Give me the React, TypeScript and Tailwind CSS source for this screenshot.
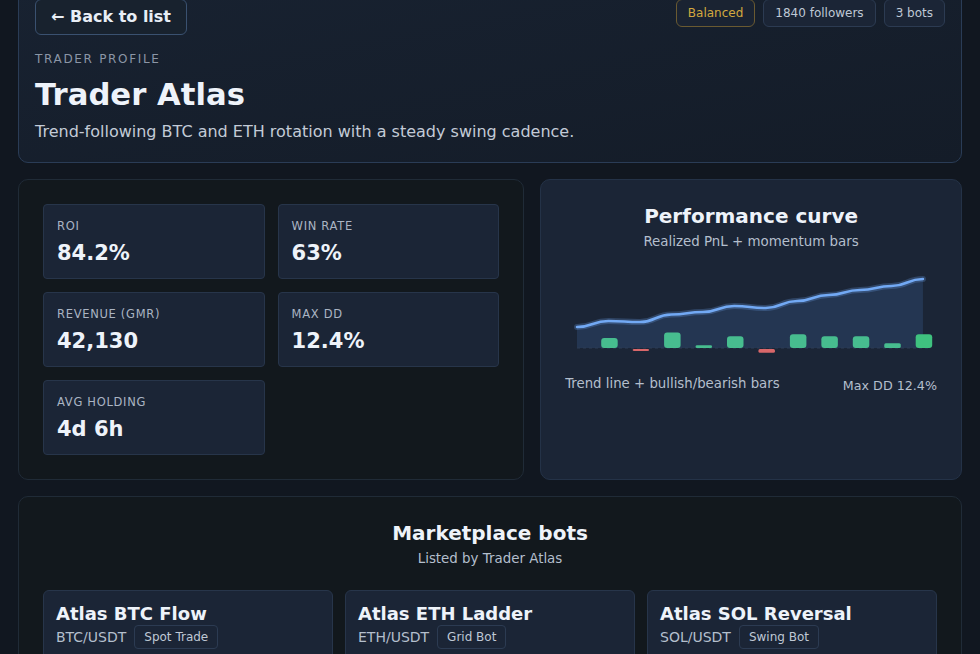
import React from 'react'

const stats = [
  { label: 'ROI', value: '84.2%' },
  { label: 'Win rate', value: '63%' },
  { label: 'Revenue (GMR)', value: '42,130' },
  { label: 'Max DD', value: '12.4%' },
  { label: 'Avg holding', value: '4d 6h' },
]

const bots = [
  { name: 'Atlas BTC Flow', pair: 'BTC/USDT', kind: 'Spot Trade' },
  { name: 'Atlas ETH Ladder', pair: 'ETH/USDT', kind: 'Grid Bot' },
  { name: 'Atlas SOL Reversal', pair: 'SOL/USDT', kind: 'Swing Bot' },
]

// equity curve points (svg coords) and momentum bars
const curve = [65, 59, 60, 52.5, 50, 44, 46, 39, 33, 28, 24, 17]
const bars = [10, -2, 15.5, 2.7, 11.7, -3.7, 13.7, 11.7, 11.7, 4.7, 13.7]
const BASE = 86

function PerformanceChart() {
  const xs = curve.map((_, i) => 12 + i * 31.45)
  let d = `M ${xs[0]} ${curve[0]}`
  for (let i = 1; i < curve.length; i++) {
    const mx = (xs[i - 1] + xs[i]) / 2
    d += ` C ${mx} ${curve[i - 1]} ${mx} ${curve[i]} ${xs[i]} ${curve[i]}`
  }
  const area = `${d} L ${xs[xs.length - 1]} ${BASE} L ${xs[0]} ${BASE} Z`

  return (
    <svg width="371" height="96" viewBox="0 0 371 96" className="block">
      <path d={area} fill="#263a57" opacity="0.85" />
      <line x1="12" y1={BASE} x2="366" y2={BASE} stroke="#2c3c54" strokeWidth="1" strokeDasharray="3 3" />
      {bars.map((h, i) => {
        const cx = xs[i + 1] + 1
        const up = h >= 0
        const hh = Math.max(Math.abs(h), 2)
        return (
          <rect
            key={i}
            x={cx - 8.25}
            y={up ? BASE - hh : BASE + 1}
            width="16.5"
            height={hh}
            rx={hh < 5 ? 1.5 : 3}
            fill={up ? (i === bars.length - 1 ? '#3fc27f' : '#47bd8f') : '#d9676a'}
          />
        )
      })}
      <path d={d} fill="none" stroke="#6fa8f5" strokeOpacity="0.25" strokeWidth="6" strokeLinecap="round" />
      <path d={d} fill="none" stroke="#72a9f4" strokeWidth="2.5" strokeLinecap="round" />
    </svg>
  )
}

export default function App() {
  return (
    <div className="min-h-screen bg-[#111720] text-[#e8eef6] font-['DejaVu_Sans',sans-serif]">
      <div className="-mt-[18px] flex flex-col gap-4 px-[18px] pb-8">
        {/* profile header */}
        <section className="rounded-[10px] border border-[#2a3c56] bg-gradient-to-br from-[#182231] to-[#141c28] px-4 pt-4 pb-[18px]">
          <div className="flex items-start justify-between">
            <button className="rounded-md border border-[#3a5170] bg-[#18222e] px-[15px] py-[7px] text-base leading-5 font-bold text-[#e8eef6]">
              ← Back to list
            </button>
            <div className="flex gap-2">
              <span className="rounded-md border border-[#6a5a31] bg-[#1a2332] px-[11px] py-[4px] text-xs leading-[18px] text-[#d2a83f]">
                Balanced
              </span>
              <span className="rounded-md border border-[#2c3b52] bg-[#1b2536] px-[11px] py-[4px] text-xs leading-[18px] text-[#bfc8d5]">
                1840 followers
              </span>
              <span className="rounded-md border border-[#2c3b52] bg-[#1b2536] px-[11px] py-[4px] text-xs leading-[18px] text-[#bfc8d5]">
                3 bots
              </span>
            </div>
          </div>
          <div className="mt-4 text-xs leading-4 tracking-[0.14em] text-[#8b96a6]">TRADER PROFILE</div>
          <h1 className="mt-2 text-[30.7px] leading-10 font-bold text-[#eef3fa]">Trader Atlas</h1>
          <p className="mt-[5px] text-base leading-6 text-[#c3cbd7]">
            Trend-following BTC and ETH rotation with a steady swing cadence.
          </p>
        </section>

        {/* stats + chart */}
        <div className="grid grid-cols-[1.2fr_1fr] gap-4">
          <section className="rounded-[10px] border border-[#202b37] bg-[#12181d] p-6">
            <div className="grid grid-cols-2 gap-[13px]">
              {stats.map((s) => (
                <div key={s.label} className="rounded-[4px] border border-[#27354a] bg-[#1b2536] px-[13px] pt-[13px] pb-[11px]">
                  <div className="text-[11.5px] leading-4 uppercase tracking-[0.06em] text-[#aab4c3]">{s.label}</div>
                  <div className="mt-[5px] text-[21px] leading-7 font-bold text-[#eef3fa]">{s.value}</div>
                </div>
              ))}
            </div>
          </section>

          <section className="rounded-[10px] border border-[#243247] bg-[#1b2536] px-6 pt-[22px]">
            <h2 className="text-center text-[20px] leading-7 font-bold text-[#eef3fa]">Performance curve</h2>
            <p className="mt-[2px] text-center text-[13.4px] leading-5 text-[#b4bfcd]">Realized PnL + momentum bars</p>
            <div className="mt-[10px]">
              <PerformanceChart />
            </div>
            <div className="mt-[17px] flex items-end justify-between leading-[18px] text-[#b4bfcd]">
              <span className="text-[13.3px]">Trend line + bullish/bearish bars</span>
              <span className="translate-y-[2px] text-[12.7px]">Max DD 12.4%</span>
            </div>
          </section>
        </div>

        {/* marketplace */}
        <section className="rounded-[10px] border border-[#202b37] bg-[#12181d] px-6 pt-[22px] pb-6">
          <h2 className="text-center text-xl leading-7 font-bold text-[#eef3fa]">Marketplace bots</h2>
          <p className="mt-[2px] text-center text-[13.4px] leading-5 text-[#b4bfcd]">Listed by Trader Atlas</p>
          <div className="mt-[21px] grid grid-cols-3 gap-3">
            {bots.map((b) => (
              <div key={b.name} className="h-[140px] rounded-md border border-[#27354a] bg-[#1b2536] px-3 pt-3">
                <div className="text-[18px] leading-[22px] font-bold text-[#eef3fa]">{b.name}</div>
                <div className="flex items-center gap-2">
                  <span className="text-sm leading-5 text-[#b4bfcd]">{b.pair}</span>
                  <span className="rounded-[4px] border border-[#2c3b52] px-[9px] py-[2px] text-xs leading-[18px] text-[#bfc8d5]">
                    {b.kind}
                  </span>
                </div>
              </div>
            ))}
          </div>
        </section>
      </div>
    </div>
  )
}
